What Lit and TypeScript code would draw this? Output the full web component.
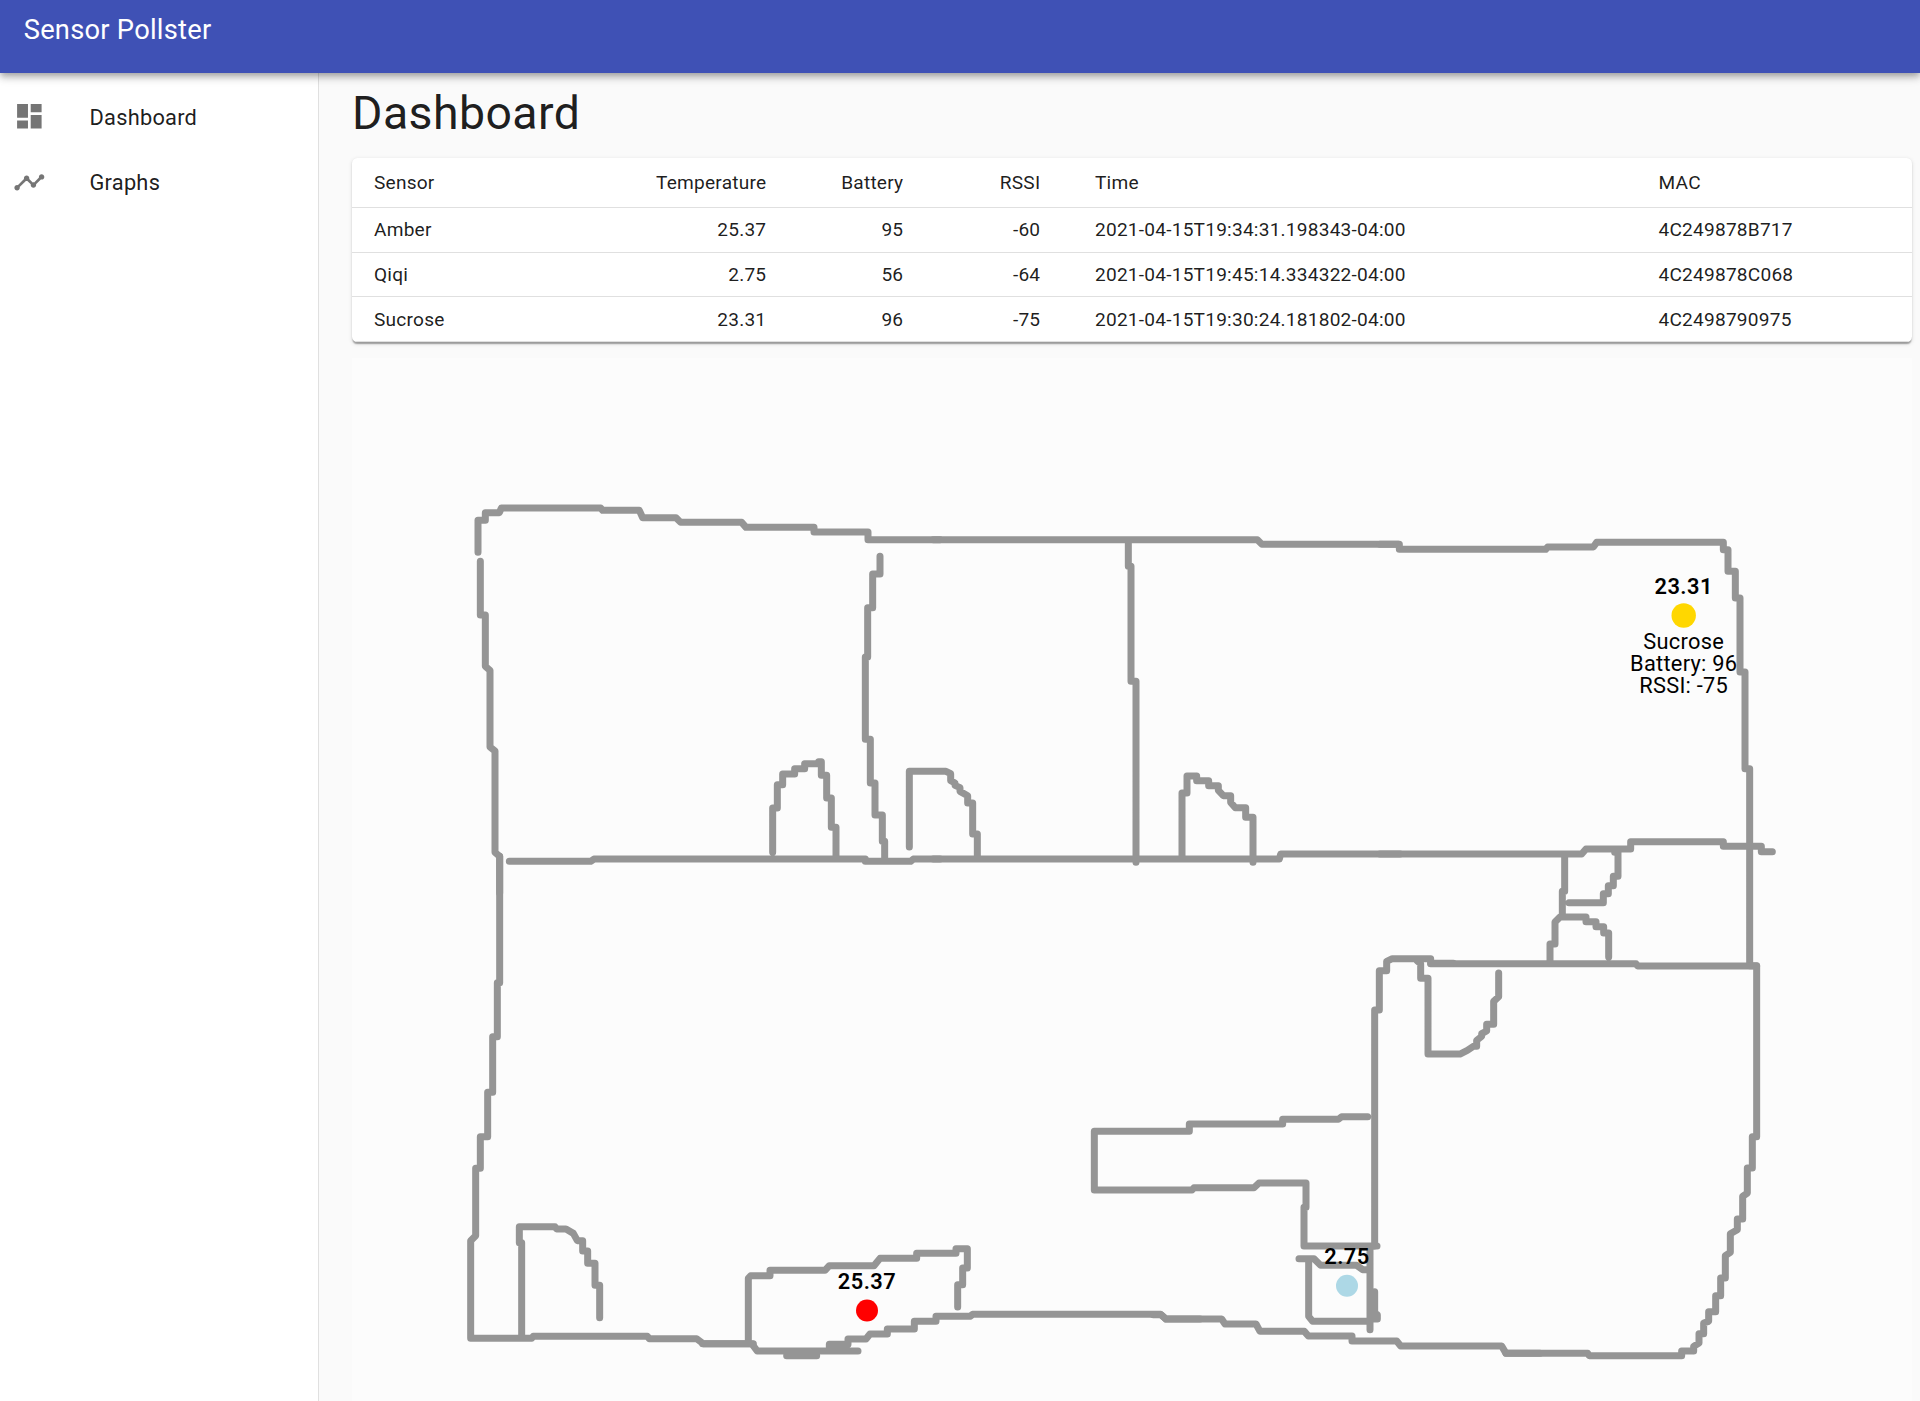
import { LitElement, html, css, svg } from "lit";
import { customElement } from "lit/decorators.js";

interface Reading {
  name: string;
  temperature: string;
  battery: number;
  rssi: number;
  time: string;
  mac: string;
}

const readings: Reading[] = [
  { name: "Amber", temperature: "25.37", battery: 95, rssi: -60, time: "2021-04-15T19:34:31.198343-04:00", mac: "4C249878B717" },
  { name: "Qiqi", temperature: "2.75", battery: 56, rssi: -64, time: "2021-04-15T19:45:14.334322-04:00", mac: "4C249878C068" },
  { name: "Sucrose", temperature: "23.31", battery: 96, rssi: -75, time: "2021-04-15T19:30:24.181802-04:00", mac: "4C2498790975" },
];

// Floor plan strokes, grouped by section; each section has its own origin
// and is drawn in thirds of a map unit.
const sections = [
  {
    x: 440, y: 480,
    d: `M114 218V122H136V99H178L184 85H482L488 92H598L608 114H708L722 128H905L918 143H1122V157H1284V180H1500
        M121 245V406H136V560L150 572V802L165 814V1118L179 1130V1240
        M208 1145H452L462 1138H1276V1145H1412L1420 1138H1500
        M998 1118V985H1012V915H1028V883H1064V867H1094V852H1144V846H1136L1144 852V887H1160V955H1174V1043H1188V1132
        M1320 230V283H1298V384H1283V532H1276V779H1291V910H1305V1006H1327V1085H1334V1140`,
  },
  {
    x: 900, y: 500,
    d: `M100 120H1072L1086 134H1495
        M685 120V200H693V545H708V1088
        M28 1042V815H138L152 822V843L165 850V857L180 864V875L203 888V910H218V1003H232V1075
        M846 1075V880H861V829H890V843H926V858H955V872L970 888H992V908L1006 924H1037V953H1059V1088
        M100 1078H1138L1142 1063H1500`,
  },
  {
    x: 1380, y: 500,
    d: `M0 134H58V149H497L503 142H640L650 128H1030V150H1044V215H1066V295H1080V517H1095V807H1109V1395
        M0 1063H605L618 1048H752V1026H1030V1040H1144V1056H1177
        M554 1065V1175H547V1252H618V1266H648V1281H671V1300H686V1372
        M547 1252H540L525 1267V1333H510V1385
        M704 1058H714V1130H700V1158H685V1182H670V1209H567
        M152 1392H768L773 1399H1130`,
  },
  {
    x: 440, y: 840,
    d: `M179 50V429H172V591H158V758H143V891H121V986H107V1188L92 1203V1496H275L280 1490H622L628 1497H770L790 1512H940
        M245 1490V1209H238V1161H345L350 1168H378L400 1181L412 1203H428V1234H443V1271H465V1337H479V1434`,
  },
  {
    x: 700, y: 1200,
    d: `M8 432H155L172 454H474M260 468H350
        M388 442V434H444V418H498L510 403H562V388H643V365H708V350H810L818 344H1382L1398 358H1500
        M145 430V236L152 228H210V212H375L388 198H522L540 176H650V161H768V147H802V205H788V255H773V322`,
  },
  {
    x: 1060, y: 930,
    d: `M1180 101H1112V87H997L980 95V123H958V241H944V950
        M1072 94L1082 102V146H1104V373H1200L1222 362L1240 350H1250V332L1265 320V312L1280 304V284H1301V215L1316 201V130
        M923 561H845L835 569H668V583H388V605H103V781H396L402 774H582L597 760H738V833H732V949H951
        M717 987H762L782 1007H890L908 1020H930M746 987V1160L758 1175H930
        M930 950V1200M944 1086V1150L952 1155V1168H935
        M280 1155H303L318 1168H485L495 1183H588L600 1205H733L745 1219H876V1234H1010L1022 1249H1325L1338 1271H1440`,
  },
  {
    x: 1400, y: 930,
    d: `M1049 108H1070V621H1057V715H1042V790L1028 800V868H1012V900L991 912V968L976 978V1045H962V1098H947V1146H926V1175L911 1180V1212H897V1240L881 1250V1264H845V1278H568L563 1271H318`,
  },
];

const markers = [
  { x: 1683.7, y: 615.5, r: 12.2, color: "gold", label: "23.31", details: ["Sucrose", "Battery: 96", "RSSI: -75"] },
  { x: 867, y: 1310.5, r: 11, color: "red", label: "25.37", details: [] as string[] },
  { x: 1347, y: 1285.8, r: 11, color: "lightblue", label: "2.75", details: [] as string[] },
];

@customElement("sensor-table")
class SensorTable extends LitElement {
  static styles = css`
    :host {
      display: block;
      background: #fff;
      border-radius: 5.5px;
      overflow: hidden;
      box-shadow: 0 3px 1.4px -1.4px rgba(0, 0, 0, 0.2), 0 1.4px 1.4px 0 rgba(0, 0, 0, 0.14), 0 1.4px 4px 0 rgba(0, 0, 0, 0.12);
    }
    .row {
      display: grid;
      grid-template-columns: 268px 179px 137px 137px 563.5px 1fr;
      align-items: center;
      height: 44.6px;
      box-sizing: border-box;
      border-bottom: 1.2px solid #e0e0e0;
    }
    .row:last-child .cell {
      padding-top: 1.2px;
    }
    .head {
      height: 50px;
      padding-bottom: 1px;
    }
    .cell {
      padding: 0 32.7px 0 22px;
      font-size: 19.1px;
      line-height: 27px;
      letter-spacing: 0.0115em;
      white-space: nowrap;
    }
    .num {
      text-align: right;
    }
  `;
  render() {
    return html`
      <div class="row head">
        <div class="cell">Sensor</div>
        <div class="cell num">Temperature</div>
        <div class="cell num">Battery</div>
        <div class="cell num">RSSI</div>
        <div class="cell">Time</div>
        <div class="cell">MAC</div>
      </div>
      ${readings.map(
        (r) => html`<div class="row">
          <div class="cell">${r.name}</div>
          <div class="cell num">${r.temperature}</div>
          <div class="cell num">${r.battery}</div>
          <div class="cell num">${r.rssi}</div>
          <div class="cell">${r.time}</div>
          <div class="cell">${r.mac}</div>
        </div>`
      )}
    `;
  }
}

@customElement("floor-map")
class FloorMap extends LitElement {
  static styles = css`
    :host {
      display: block;
      background: #fcfcfc;
    }
    .plan {
      display: block;
      width: 1560px;
      height: 1043px;
    }
    .wall {
      fill: none;
      stroke: #959595;
      stroke-width: 21;
      stroke-linecap: round;
      stroke-linejoin: round;
    }
    .label,
    .detail {
      font-size: 21.8px;
      text-anchor: middle;
      fill: #000;
      letter-spacing: 0.27px;
    }
    .label {
      font-weight: 600;
      letter-spacing: 0.5px;
    }
  `;
  render() {
    return html`<svg class="plan" viewBox="352 358 1560 1043">
      ${sections.map(
        (s) => svg`<path class="wall" transform="translate(${s.x} ${s.y - 0.3}) scale(0.33333)" d=${s.d}></path>`
      )}
      ${markers.map(
        (m) => svg`
          <circle cx=${m.x} cy=${m.y} r=${m.r} fill=${m.color}></circle>
          <text class="label" x=${m.x} y=${m.y - 22}>${m.label}</text>
          ${m.details.map((t, i) => svg`<text class="detail" x=${m.x} y=${m.y + 33.4 + i * 22}>${t}</text>`)}
        `
      )}
    </svg>`;
  }
}

@customElement("app-root")
class AppRoot extends LitElement {
  static styles = css`
    :host {
      display: flex;
      flex-direction: column;
      height: 1401px;
      overflow: hidden;
      background: #fafafa;
      color: rgba(0, 0, 0, 0.89);
      font-family: Roboto, "Liberation Sans", sans-serif;
    }
    .bar {
      flex: none;
      height: 73px;
      box-sizing: border-box;
      padding: 9px 23.7px 0;
      background: #3f51b5;
      color: #fff;
      font-size: 27.3px;
      line-height: 43.6px;
      letter-spacing: 0.009em;
      z-index: 1;
      box-shadow: 0 3px 5.5px -1.4px rgba(0, 0, 0, 0.2), 0 5.5px 7px 0 rgba(0, 0, 0, 0.14), 0 1.4px 14px 0 rgba(0, 0, 0, 0.12);
    }
    .body {
      flex: 1;
      display: flex;
      min-height: 0;
    }
    .side {
      flex: none;
      width: 319px;
      box-sizing: border-box;
      border-right: 1px solid #e0e0e0;
      background: #fff;
      padding-top: 11.4px;
    }
    .item {
      display: flex;
      align-items: center;
      height: 65.5px;
      padding-left: 12.6px;
      font-size: 21.8px;
      letter-spacing: 0.0115em;
    }
    .icon {
      width: 32.7px;
      height: 32.7px;
      margin: 0 44.2px 0.8px 0;
      fill: rgba(0, 0, 0, 0.54);
    }
    .main {
      width: 1560px;
      margin-left: 33px;
      display: flex;
      flex-direction: column;
    }
    .title {
      margin: 0;
      height: 85px;
      padding-top: 12px;
      box-sizing: border-box;
      font-size: 46.4px;
      line-height: 57px;
      font-weight: 400;
      letter-spacing: 0.0095em;
    }
    .map {
      margin-top: 16.2px;
    }
  `;
  render() {
    return html`
      <header class="bar">Sensor Pollster</header>
      <div class="body">
        <nav class="side">
          <div class="item">
            <svg class="icon" viewBox="0 0 24 24"><path d="M3 13h8V3H3v10zm0 8h8v-6H3v6zm10 0h8V11h-8v10zm0-18v6h8V3h-8z" /></svg>
            <span>Dashboard</span>
          </div>
          <div class="item">
            <svg class="icon" viewBox="0 0 24 24">
              <path d="M23 8c0 1.100-.9 2-2 2-.18 0-.35-.02-.51-.07l-3.560 3.550c.05.16.07.34.07.52 0 1.100-.9 2-2 2s-2-.9-2-2c0-.18.02-.36.07-.52l-2.550-2.550c-.16.05-.34.07-.52.07s-.36-.02-.52-.07l-4.550 4.560c.05.16.07.33.07.51 0 1.100-.9 2-2 2s-2-.9-2-2 .9-2 2-2c.18 0 .35.02.51.07l4.560-4.550C8.020 9.360 8 9.180 8 9c0-1.100.9-2 2-2s2 .9 2 2c0 .18-.02.36-.07.52l2.550 2.550c.16-.05.34-.07.52-.07s.36.02.52.07l3.550-3.560C19.020 8.350 19 8.180 19 8c0-1.100.9-2 2-2s2 .9 2 2z" />
            </svg>
            <span>Graphs</span>
          </div>
        </nav>
        <main class="main">
          <h1 class="title">Dashboard</h1>
          <sensor-table></sensor-table>
          <floor-map class="map"></floor-map>
        </main>
      </div>
    `;
  }
}
